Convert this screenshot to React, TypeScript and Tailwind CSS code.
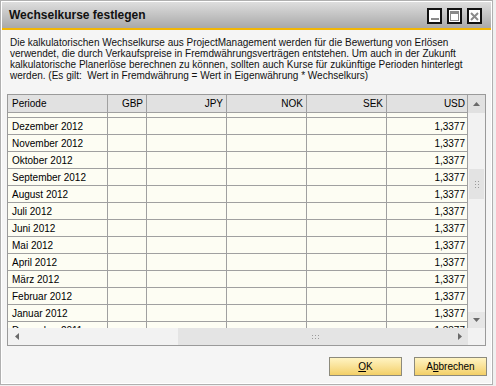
import React from 'react';

const periods = [
  'Dezember 2012',
  'November 2012',
  'Oktober 2012',
  'September 2012',
  'August 2012',
  'Juli 2012',
  'Juni 2012',
  'Mai 2012',
  'April 2012',
  'März 2012',
  'Februar 2012',
  'Januar 2012',
  'Dezember 2011',
];

const cols = [
  { key: 'periode', label: 'Periode', w: 'w-[100px]', align: 'justify-start pl-[4px]' },
  { key: 'gbp', label: 'GBP', w: 'w-[39px]', align: 'justify-end pr-[3px]' },
  { key: 'jpy', label: 'JPY', w: 'w-[80px]', align: 'justify-end pr-[3px]' },
  { key: 'nok', label: 'NOK', w: 'w-[80px]', align: 'justify-end pr-[3px]' },
  { key: 'sek', label: 'SEK', w: 'w-[80px]', align: 'justify-end pr-[3px]' },
  { key: 'usd', label: 'USD', w: 'w-[81px]', align: 'justify-end pr-[2px]' },
];

const Grip = ({ vertical }: { vertical?: boolean }) => (
  <div className={`grid gap-[2px] ${vertical ? 'grid-cols-2' : 'grid-cols-3'}`}>
    {[...Array(6)].map((_, i) => (
      <span key={i} className="w-[1px] h-[1px] bg-[#9a9a9a]" />
    ))}
  </div>
);

const Row = ({ period, h }: { period?: string; h: string }) => (
  <div className={`flex ${h} border-b border-[#a0a0a0] shrink-0`}>
    {cols.map((c) => (
      <div key={c.key} className={`${c.w} shrink-0 border-r border-[#a0a0a0] flex items-center ${c.align}`}>
        {period && c.key === 'periode' && <span className="whitespace-nowrap">{period}</span>}
        {period && c.key === 'usd' && <span>1,3377</span>}
      </div>
    ))}
  </div>
);

export default function App() {
  return (
    <div
      className="w-[496px] h-[386px] bg-[#f0f0f0] text-black text-[10px] leading-[13px]"
      style={{ fontFamily: '"Liberation Sans", Arial, sans-serif' }}
    >
      <div className="w-[493px] h-[385px] border border-[#b0b0b0] bg-white p-[1px] flex flex-col">
        <div className="flex-1 flex flex-col bg-[#f5f5f5]">
          {/* Title bar */}
          <div className="h-[26px] shrink-0 flex items-center justify-between pl-[7px] pr-[9px] bg-gradient-to-b from-[#dedede] to-[#a9a9a9]">
            <span className="font-bold text-[12px] text-[#111]">Wechselkurse festlegen</span>
            <div className="flex items-center gap-[4px] mt-[2px]">
              <div className="w-[15px] h-[16px] border-2 border-[#111] bg-white flex items-end justify-center pb-[2px]">
                <span className="w-[8px] h-[2px] bg-[#8a8a8a]" />
              </div>
              <div className="w-[15px] h-[16px] border-2 border-[#111] bg-white p-[1px] ml-[1px]">
                <div className="w-full h-full border border-[#8a8a8a] border-t-[3px]" />
              </div>
              <div className="w-[15px] h-[16px] border-2 border-[#111] bg-white flex items-center justify-center ml-[1px]">
                <svg width="9" height="9" viewBox="0 0 9 9">
                  <path d="M1 1 L8 8 M8 1 L1 8" stroke="#8a8a8a" strokeWidth="2" />
                </svg>
              </div>
            </div>
          </div>
          <div className="h-[2px] shrink-0 bg-[#f2b705]" />

          {/* Description */}
          <div className="px-[8px] pt-[7px] leading-[11px] text-[#111] whitespace-nowrap">
            Die kalkulatorischen Wechselkurse aus ProjectManagement werden für die Bewertung von Erlösen
            <br />
            verwendet, die durch Verkaufspreise in Fremdwährungsverträgen entstehen. Um auch in der Zukunft
            <br />
            kalkulatorische Planerlöse berechnen zu können, sollten auch Kurse für zukünftige Perioden hinterlegt
            <br />
            werden. (Es gilt:&nbsp; Wert in Fremdwährung = Wert in Eigenwährung * Wechselkurs)
          </div>

          {/* Table */}
          <div className="ml-[5px] mt-[13px] w-[479px] border border-[#9a9a9a] flex flex-col">
            <div className="flex">
              <div className="flex flex-col w-[461px]">
                <div className="flex h-[18px] bg-[#e1e1e1] border-b border-[#a0a0a0] shrink-0">
                  {cols.map((c) => (
                    <div key={c.key} className={`${c.w} shrink-0 border-r border-[#a0a0a0] flex items-center ${c.align}`}>
                      {c.label}
                    </div>
                  ))}
                </div>
                <div className="h-[215px] overflow-hidden flex flex-col bg-[#fdfdf3]">
                  <Row h="h-[5px]" />
                  {periods.map((p) => (
                    <Row key={p} period={p} h="h-[17px]" />
                  ))}
                </div>
              </div>
              {/* vertical scrollbar */}
              <div className="w-[17px] flex flex-col bg-[#f2f2f2]">
                <div className="h-[18px] bg-[#e1e1e1] flex items-center justify-center">
                  <svg width="7" height="4" viewBox="0 0 7 4">
                    <path d="M0 4 L3.5 0 L7 4 Z" fill="#6a6a6a" />
                  </svg>
                </div>
                <div className="h-[56px]" />
                <div className="h-[30px] mx-[1px] bg-[#e3e3e3] flex items-center justify-center">
                  <Grip vertical />
                </div>
                <div className="flex-1" />
                <div className="h-[16px] bg-[#e6e6e6] flex items-center justify-center">
                  <svg width="7" height="4" viewBox="0 0 7 4">
                    <path d="M0 0 L7 0 L3.5 4 Z" fill="#6a6a6a" />
                  </svg>
                </div>
              </div>
            </div>
            {/* horizontal scrollbar */}
            <div className="flex h-[17px]">
              <div className="w-[461px] flex items-center bg-[#f2f2f2]">
                <div className="w-[17px] h-full flex items-center justify-center">
                  <svg width="4" height="7" viewBox="0 0 4 7">
                    <path d="M4 0 L0 3.5 L4 7 Z" fill="#6a6a6a" />
                  </svg>
                </div>
                <div className="w-[153px]" />
                <div className="w-[274px] h-full bg-[#e4e4e4] flex items-center justify-center">
                  <Grip />
                </div>
                <div className="flex-1 h-full flex items-center justify-center bg-[#e4e4e4]">
                  <svg width="4" height="7" viewBox="0 0 4 7">
                    <path d="M0 0 L4 3.5 L0 7 Z" fill="#6a6a6a" />
                  </svg>
                </div>
              </div>
              <div className="w-[17px] bg-[#f2f2f2]" />
            </div>
          </div>

          {/* Buttons */}
          <div className="flex justify-end gap-[12px] pr-[4px] mt-[11px]">
            <button className="w-[73px] h-[19px] border border-[#8c8a7c] bg-gradient-to-b from-[#fff4c2] to-[#f3cf66] text-[10px] leading-none">
              <span className="underline">O</span>K
            </button>
            <button className="w-[73px] h-[19px] border border-[#8c8a7c] bg-gradient-to-b from-[#fff4c2] to-[#f3cf66] text-[10px] leading-none">
              A<span className="underline">b</span>brechen
            </button>
          </div>
        </div>
      </div>
    </div>
  );
}
